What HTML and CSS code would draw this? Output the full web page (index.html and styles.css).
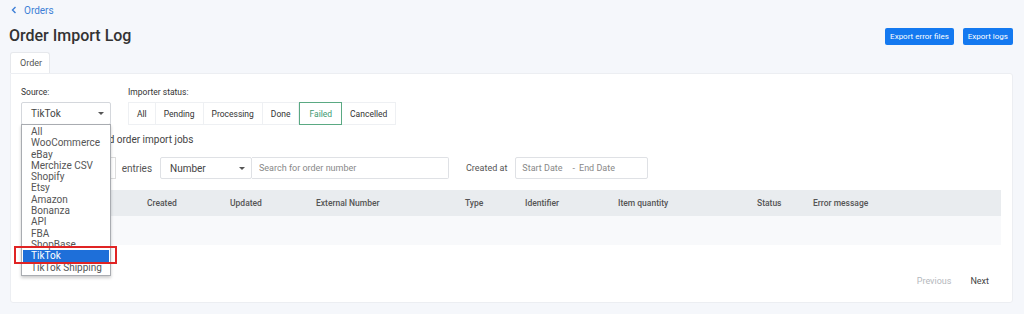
FILE: index.html
```html
<!DOCTYPE html>
<html lang="en">
<head>
    <meta charset="UTF-8">
    <meta name="viewport" content="width=device-width, initial-scale=1.0">
    <title>Order Import Log</title>
    <link rel="stylesheet" href="styles.css">
</head>
<body>
    <div class="breadcrumb">
        <svg class="chevron" width="8" height="8" viewBox="0 0 8 8"><path d="M5.5 1 L2.5 4 L5.5 7" fill="none" stroke="#3d7fd6" stroke-width="1.4"/></svg>
        <a href="#">Orders</a>
    </div>

    <div class="page-header">
        <h1>Order Import Log</h1>
        <div class="actions">
            <button class="btn-primary">Export error files</button>
            <button class="btn-primary">Export logs</button>
        </div>
    </div>

    <div class="tabs">
        <div class="tab active">Order</div>
    </div>

    <div class="card">
        <div class="filters">
            <div class="filter source-filter">
                <label>Source:</label>
                <div class="select-wrap">
                    <div class="select">
                        <span>TikTok</span>
                        <span class="caret"></span>
                    </div>
                    <ul class="dropdown">
                        <li>All</li>
                        <li>WooCommerce</li>
                        <li>eBay</li>
                        <li>Merchize CSV</li>
                        <li>Shopify</li>
                        <li>Etsy</li>
                        <li>Amazon</li>
                        <li>Bonanza</li>
                        <li>API</li>
                        <li>FBA</li>
                        <li>ShopBase</li>
                        <li class="selected">TikTok</li>
                        <li>TikTok Shipping</li>
                    </ul>
                    <div class="highlight"></div>
                </div>
            </div>
            <div class="filter">
                <label>Importer status:</label>
                <div class="btn-group">
                    <button>All</button>
                    <button>Pending</button>
                    <button>Processing</button>
                    <button>Done</button>
                    <button class="active">Failed</button>
                    <button>Cancelled</button>
                </div>
            </div>
        </div>

        <p class="summary">Showing 0 of 0 failed order import jobs</p>

        <div class="toolbar">
            <div class="entries">
                <span>Show</span>
                <span class="small-select">10</span>
                <span>entries</span>
            </div>
            <div class="search-group">
                <div class="select field-select">
                    <span>Number</span>
                    <span class="caret"></span>
                </div>
                <input type="text" placeholder="Search for order number">
            </div>
            <div class="date-filter">
                <span>Created at</span>
                <div class="date-range">
                    <span>Start Date</span>
                    <span class="sep">-</span>
                    <span>End Date</span>
                </div>
            </div>
        </div>

        <table class="log-table">
            <thead>
                <tr>
                    <th class="col-id"></th>
                    <th class="col-created">Created</th>
                    <th class="col-updated">Updated</th>
                    <th class="col-external">External Number</th>
                    <th class="col-type">Type</th>
                    <th class="col-identifier">Identifier</th>
                    <th class="col-qty">Item quantity</th>
                    <th class="col-status">Status</th>
                    <th>Error message</th>
                </tr>
            </thead>
            <tbody>
                <tr class="empty-row"><td colspan="9"></td></tr>
            </tbody>
        </table>

        <div class="pagination">
            <span class="page-link disabled">Previous</span>
            <span class="page-link">Next</span>
        </div>
    </div>
</body>
</html>
```

FILE: styles.css
```css
body {
    font-family: Roboto, "Liberation Sans", sans-serif;
    margin: 0;
    padding: 0 11px 0 10px;
    background-color: #f5f7fb;
    color: #333;
    font-size: 9px;
}
.breadcrumb {
    display: flex;
    align-items: center;
    gap: 6px;
    height: 14px;
    padding-top: 3px;
    font-size: 10px;
}
.breadcrumb a {
    color: #3d7fd6;
    text-decoration: none;
}
.page-header {
    display: flex;
    justify-content: space-between;
    align-items: center;
    height: 22px;
    margin-top: 7px;
}
h1 {
    margin: 0 0 0 -1px;
    font-size: 16px;
    font-weight: 500;
    color: #333;
}
.actions {
    display: flex;
    gap: 9px;
    margin-top: 2px;
}
.btn-primary {
    height: 17px;
    padding: 0 5px;
    background-color: #1479f0;
    color: white;
    border: none;
    border-radius: 2px;
    font-family: inherit;
    font-size: 8px;
    cursor: pointer;
}
.tabs {
    display: flex;
    margin-top: 6px;
}
.tab {
    height: 21px;
    line-height: 21px;
    padding: 0 9px;
    font-size: 9px;
    color: #555;
    background-color: white;
    border: 1px solid #e6e8ec;
    border-bottom: none;
    border-radius: 3px 3px 0 0;
    box-sizing: border-box;
    width: 40px;
}
.card {
    background-color: white;
    border: 1px solid #eceef2;
    border-radius: 0 3px 3px 3px;
    height: 230px;
    box-sizing: border-box;
    padding: 13px 11px 0 10px;
}
.filters {
    display: flex;
    gap: 17px;
}
.filter label {
    display: block;
    height: 11px;
    line-height: 11px;
    font-size: 8.5px;
    color: #333;
    margin-bottom: 4px;
}
.select-wrap {
    position: relative;
}
.select {
    display: flex;
    justify-content: space-between;
    align-items: center;
    box-sizing: border-box;
    width: 90px;
    height: 23px;
    padding: 0 6px 0 9px;
    border: 1px solid #d4d7dc;
    border-radius: 2px;
    font-size: 10px;
    color: #444;
    background: white;
}
.caret {
    width: 0;
    height: 0;
    border-left: 3px solid transparent;
    border-right: 3px solid transparent;
    border-top: 3px solid #555;
}
.dropdown {
    position: absolute;
    top: 22px;
    left: 0;
    width: 90px;
    box-sizing: border-box;
    margin: 0;
    padding: 1px 1px 2px;
    list-style: none;
    background: white;
    border: 1px solid #a9acb1;
    box-shadow: 0 2px 3px rgba(0,0,0,0.2);
    z-index: 5;
}
.dropdown li {
    height: 11.3px;
    line-height: 11.3px;
    padding-left: 8px;
    font-size: 10px;
    color: #555;
}
.dropdown li.selected {
    background-color: #1e6fd9;
    color: white;
}
.highlight {
    position: absolute;
    top: 144px;
    left: -7px;
    width: 103px;
    height: 18px;
    box-sizing: border-box;
    border: 2px solid #e02424;
    z-index: 6;
}
.btn-group {
    display: flex;
    height: 23px;
    border: 1px solid #eef0f3;
    box-sizing: border-box;
}
.btn-group button {
    height: 100%;
    padding: 0 8px;
    background: white;
    border: none;
    border-right: 1px solid #eef0f3;
    font-family: inherit;
    font-size: 8.5px;
    color: #333;
    cursor: pointer;
}
.btn-group button:last-child {
    border-right: none;
}
.btn-group button.active {
    color: #3d9970;
    border: 1px solid #5aa983;
    margin: -1px 0;
    height: 23px;
    padding: 0 9px;
}
.summary {
    margin: 9px 0 0;
    height: 12px;
    line-height: 12px;
    font-size: 10px;
    color: #444;
}
.toolbar {
    display: flex;
    align-items: center;
    height: 22px;
    margin-top: 11px;
}
.entries {
    display: flex;
    align-items: center;
    gap: 6px;
    font-size: 10px;
    color: #555;
    width: 139px;
}
.small-select {
    width: 62px;
    height: 20px;
    border: 1px solid #ddd;
}
.search-group {
    display: flex;
    height: 22px;
}
.field-select {
    width: 92px;
    height: 22px;
    padding-left: 9px;
    border-color: #dfe1e5;
}
.search-group input[type="text"] {
    width: 197px;
    height: 22px;
    box-sizing: border-box;
    padding: 0 7px;
    border: 1px solid #dfe1e5;
    border-left: none;
    border-radius: 0 2px 2px 0;
    font-family: inherit;
    font-size: 9px;
}
.search-group input::placeholder {
    color: #888;
}
.date-filter {
    display: flex;
    align-items: center;
    gap: 8px;
    margin-left: 17px;
    font-size: 9px;
    color: #555;
}
.date-range {
    display: flex;
    align-items: center;
    width: 133px;
    height: 22px;
    box-sizing: border-box;
    padding: 0 6px;
    border: 1px solid #dfe1e5;
    border-radius: 2px;
    color: #888;
}
.date-range .sep {
    margin: 0 4px 0 10px;
}
.log-table {
    width: 100%;
    margin-top: 11px;
    border-collapse: collapse;
    font-size: 8.5px;
}
.log-table th {
    height: 26px;
    padding: 0;
    text-align: left;
    font-weight: 500;
    color: #555;
    background-color: #e9ecef;
}
.col-id { width: 126px; }
.col-created { width: 83px; }
.col-updated { width: 86px; }
.col-external { width: 149px; }
.col-type { width: 60px; }
.col-identifier { width: 93px; }
.col-qty { width: 139px; }
.col-status { width: 56px; }
.empty-row td {
    height: 27px;
    background-color: #f8f9fb;
    border-bottom: 10px solid white;
    box-shadow: 0 1px 0 #eceef1;
}
.pagination {
    display: flex;
    justify-content: flex-end;
    gap: 19px;
    margin-top: 21px;
    padding-right: 12px;
    font-size: 9px;
}
.page-link {
    color: #444;
}
.page-link.disabled {
    color: #b5b8bd;
}
```
